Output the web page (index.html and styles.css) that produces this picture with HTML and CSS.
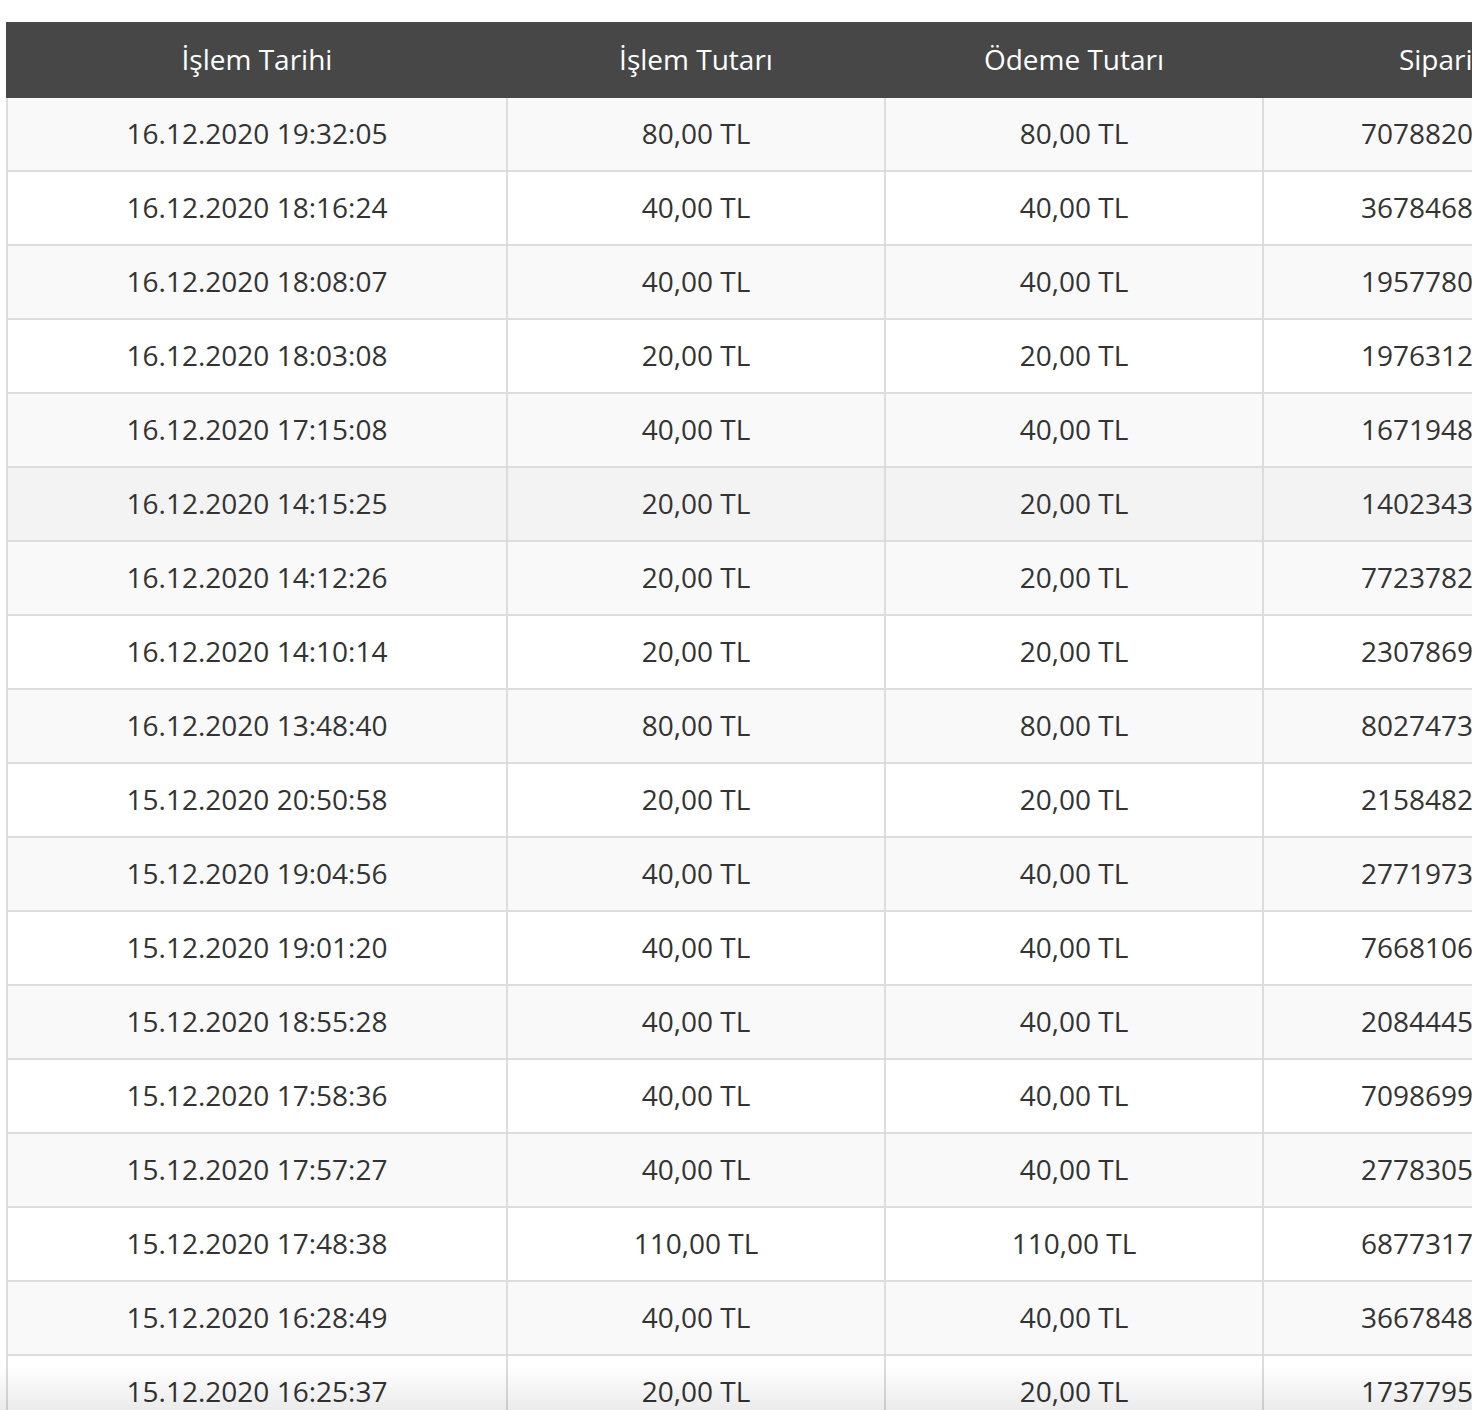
FILE: index.html
```html
<!DOCTYPE html>
<html lang="tr">
<head>
<meta charset="utf-8">
<title>İşlemler</title>
<link rel="stylesheet" href="styles.css">
</head>
<body>
<div class="wrap">
<table class="tx">
<thead>
<tr><th class="c1">İşlem Tarihi</th><th class="c2">İşlem Tutarı</th><th class="c3">Ödeme Tutarı</th><th class="c4">Sipariş No</th></tr>
</thead>
<tbody>
<tr><td>16.12.2020 19:32:05</td><td>80,00 TL</td><td>80,00 TL</td><td>7078820451236</td></tr>
<tr><td>16.12.2020 18:16:24</td><td>40,00 TL</td><td>40,00 TL</td><td>3678468120945</td></tr>
<tr><td>16.12.2020 18:08:07</td><td>40,00 TL</td><td>40,00 TL</td><td>1957780364821</td></tr>
<tr><td>16.12.2020 18:03:08</td><td>20,00 TL</td><td>20,00 TL</td><td>1976312587430</td></tr>
<tr><td>16.12.2020 17:15:08</td><td>40,00 TL</td><td>40,00 TL</td><td>1671948203657</td></tr>
<tr class="hover"><td>16.12.2020 14:15:25</td><td>20,00 TL</td><td>20,00 TL</td><td>1402343918264</td></tr>
<tr><td>16.12.2020 14:12:26</td><td>20,00 TL</td><td>20,00 TL</td><td>7723782045193</td></tr>
<tr><td>16.12.2020 14:10:14</td><td>20,00 TL</td><td>20,00 TL</td><td>2307869512048</td></tr>
<tr><td>16.12.2020 13:48:40</td><td>80,00 TL</td><td>80,00 TL</td><td>8027473061925</td></tr>
<tr><td>15.12.2020 20:50:58</td><td>20,00 TL</td><td>20,00 TL</td><td>2158482739016</td></tr>
<tr><td>15.12.2020 19:04:56</td><td>40,00 TL</td><td>40,00 TL</td><td>2771973405862</td></tr>
<tr><td>15.12.2020 19:01:20</td><td>40,00 TL</td><td>40,00 TL</td><td>7668106293574</td></tr>
<tr><td>15.12.2020 18:55:28</td><td>40,00 TL</td><td>40,00 TL</td><td>2084445170389</td></tr>
<tr><td>15.12.2020 17:58:36</td><td>40,00 TL</td><td>40,00 TL</td><td>7098699824510</td></tr>
<tr><td>15.12.2020 17:57:27</td><td>40,00 TL</td><td>40,00 TL</td><td>2778305641297</td></tr>
<tr><td>15.12.2020 17:48:38</td><td>110,00 TL</td><td>110,00 TL</td><td>6877317502843</td></tr>
<tr><td>15.12.2020 16:28:49</td><td>40,00 TL</td><td>40,00 TL</td><td>3667848215906</td></tr>
<tr><td>15.12.2020 16:25:37</td><td>20,00 TL</td><td>20,00 TL</td><td>1737795460128</td></tr>
<tr><td>15.12.2020 16:12:09</td><td>40,00 TL</td><td>40,00 TL</td><td>5093127846310</td></tr>
</tbody>
</table>
</div>
<div class="bottom-shade"></div>
</body>
</html>
```

FILE: styles.css
```css
html, body {
  overflow: hidden;
}
body {
  margin: 22px 0 0 6px;
  background: #fff;
  font-family: "Open Sans", "DejaVu Sans", sans-serif;
  font-size: 28px;
  color: #333;
}
.wrap {
  overflow: hidden;
}
.tx {
  border-collapse: separate;
  border-spacing: 0;
  table-layout: fixed;
  width: 1662px;
}
.tx th, .tx td {
  box-sizing: border-box;
  text-align: center;
  white-space: nowrap;
  line-height: 40px;
}
.tx th {
  background: #474747;
  color: #fff;
  font-weight: 400;
  padding: 17px 0 19px;
  border-right: 2px solid #474747;
}
.tx th.c1 { width: 502px; border-left: 2px solid #474747; }
.tx th.c2 { width: 378px; }
.tx th.c3 { width: 378px; }
.tx th.c4 { width: 404px; }
.tx td {
  padding: 15px 0 17px;
  border-right: 2px solid #dddddd;
  border-bottom: 2px solid #dddddd;
}
.tx td:first-child {
  border-left: 2px solid #dddddd;
}
.tx tbody tr:nth-child(odd) td {
  background: #f9f9f9;
}
.tx tbody tr:nth-child(even) td {
  background: #fff;
}
.tx tbody tr.hover td {
  background: #f3f3f3;
}
.bottom-shade {
  position: fixed;
  left: 0;
  right: 0;
  bottom: 0;
  height: 44px;
  background: linear-gradient(to bottom, rgba(0,0,0,0), rgba(0,0,0,0.08));
  pointer-events: none;
}
```
